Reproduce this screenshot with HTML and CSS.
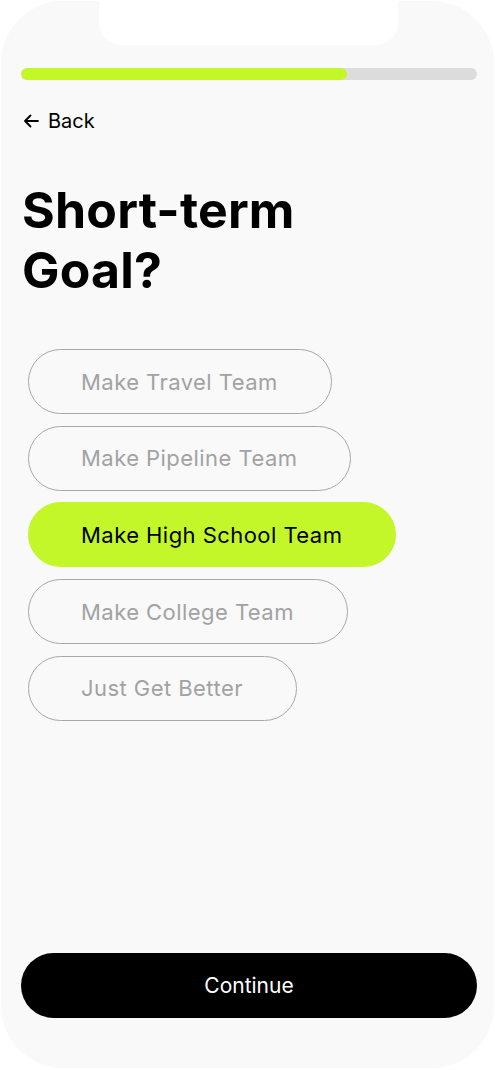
FILE: index.html
```html
<!DOCTYPE html>
<html lang="en">
<head>
<meta charset="utf-8">
<title>Short-term Goal</title>
<link rel="stylesheet" href="styles.css">
</head>
<body>
<div class="phone">
  <div class="notch"></div>
  <div class="progress"><div class="progress-fill" style="width: 71.5%"></div></div>
  <a class="back" href="#">
    <svg class="back-icon" width="16" height="14" viewBox="0 0 16 14" aria-hidden="true"><path d="M15 7H2M7.5 1.5L2 7l5.5 5.5" fill="none" stroke="#000" stroke-width="1.8" stroke-linecap="round" stroke-linejoin="round"/></svg>
    <span>Back</span>
  </a>
  <h1 class="title">Short-term<br>Goal?</h1>
  <div class="options">
    <button class="option">Make Travel Team</button>
    <button class="option">Make Pipeline Team</button>
    <button class="option selected">Make High School Team</button>
    <button class="option">Make College Team</button>
    <button class="option">Just Get Better</button>
  </div>
  <button class="continue">Continue</button>
</div>
</body>
</html>
```
FILE: styles.css
```css
* { box-sizing: border-box; }
html, body { margin: 0; padding: 0; background: #fff; }
body { font-family: Inter, "Noto Sans", sans-serif; }

.phone {
  position: relative;
  width: 493px;
  height: 1067px;
  margin: 1px;
  background: #f9f9f9;
  border-radius: 62px;
  display: flex;
  flex-direction: column;
  align-items: flex-start;
  padding: 67px 17px 50px 20px;
  overflow: hidden;
}

.notch {
  position: absolute;
  top: -1px;
  left: 98px;
  width: 299px;
  height: 45px;
  background: #fff;
  border-radius: 0 0 22px 22px;
}

.progress {
  width: 456px;
  height: 12px;
  background: #dcdcdc;
  border-radius: 6px;
  overflow: hidden;
  align-self: flex-start;
}
.progress-fill { height: 100%; background: #c3f729; border-radius: 6px; }

.back {
  margin-top: 29px;
  margin-left: 2px;
  display: flex;
  align-items: center;
  gap: 9px;
  color: #000;
  text-decoration: none;
  font-size: 20px;
  line-height: 24px;
}
.back-icon { display: block; }

.title {
  margin: 47px 0 0 1px;
  font-size: 50px;
  line-height: 60px;
  font-weight: 700;
  letter-spacing: 0.2px;
  color: #000;
}

.options {
  margin-top: 49px;
  margin-left: 7px;
  display: flex;
  flex-direction: column;
  align-items: flex-start;
  gap: 11.7px;
}
.option {
  height: 65px;
  padding: 0 53px 0 52px;
  border: 1px solid #a8a8a8;
  border-radius: 33px;
  background: transparent;
  font-family: Inter, "Noto Sans", sans-serif;
  font-size: 22px;
  letter-spacing: 0.45px;
  color: #a2a2a2;
  cursor: pointer;
}
.option.selected {
  background: #c3f729;
  border-color: #c3f729;
  color: #000;
}

.continue {
  margin-top: auto;
  width: 456px;
  height: 65px;
  border: none;
  border-radius: 33px;
  background: #000;
  color: #fff;
  font-family: Inter, "Noto Sans", sans-serif;
  font-size: 21px;
  cursor: pointer;
}
```
